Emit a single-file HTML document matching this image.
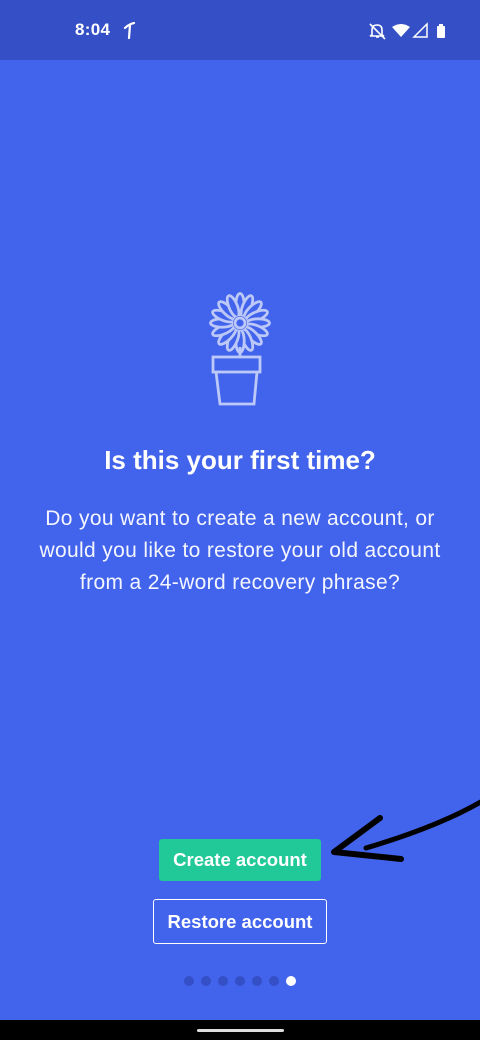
<!DOCTYPE html>
<html><head><meta charset="utf-8"><style>
*{margin:0;padding:0;box-sizing:border-box}
body{width:480px;height:1040px;background:#4263EB;position:relative;overflow:hidden;font-family:"Liberation Sans",sans-serif;color:#fff}
.sb{position:absolute;left:0;top:0;width:480px;height:60px;background:#3550C6}
.time{position:absolute;left:75px;top:20px;font-size:17px;font-weight:bold;letter-spacing:0.3px}
h1{position:absolute;top:445px;width:100%;text-align:center;font-size:26px;font-weight:bold}
.body{position:absolute;top:503px;width:100%;text-align:center;font-size:21px;letter-spacing:0.35px;line-height:32px;font-weight:300;color:#f4f6ff}
.btn{position:absolute;display:flex;align-items:center;justify-content:center;font-weight:bold;font-size:18.5px}
.c{left:159px;top:839px;width:162px;height:42px;background:#20C997;border-radius:3px}
.r{left:153px;top:899px;width:174px;height:45px;border:1.5px solid #fff;border-radius:3px}
.dot{position:absolute;top:976px;width:10px;height:10px;border-radius:50%;background:#3550C6}
.nav{position:absolute;left:0;top:1020px;width:480px;height:20px;background:#000}
.home{position:absolute;left:197px;top:1029px;width:87px;height:3px;border-radius:2px;background:#ddd}
</style></head><body>
<div class="sb"></div>
<div class="time">8:04</div>
<svg style="position:absolute;left:122px;top:22px" width="14" height="18" viewBox="0 0 14 18"><path d="M3 6 Q7 2 12 1 M8 3 L7 16" stroke="#fff" stroke-width="2.2" fill="none" stroke-linecap="round"/></svg>
<svg style="position:absolute;left:368px;top:22px" width="82" height="18" viewBox="0 0 82 18">
<path d="M4 13 L4 8 Q4 3 9 3 Q14 3 14 8 L14 13 L16 14 L2 14Z M8 15 h3" stroke="#fff" stroke-width="1.6" fill="none"/><path d="M2 2 L17 17" stroke="#fff" stroke-width="1.6"/>
<path d="M24 5 Q33 -1 42 5 L33 15Z" fill="#fff"/>
<path d="M46 15 L59 2 L59 15Z" stroke="#fff" stroke-width="1.5" fill="none"/>
<rect x="69" y="4" width="8" height="12" rx="1" fill="#fff"/><rect x="71" y="2" width="4" height="2" fill="#fff"/>
</svg>
<svg style="position:absolute;left:200px;top:285px" width="80" height="125" viewBox="0 0 80 125">
<g stroke="#BCC8F8" stroke-width="2.8" fill="none">
<g transform="translate(40,38)" fill="#4263EB">
<ellipse cx="0" cy="-18" rx="4.2" ry="11.5" transform="rotate(0)"/>
<ellipse cx="0" cy="-18" rx="4.2" ry="11.5" transform="rotate(22.5)"/>
<ellipse cx="0" cy="-18" rx="4.2" ry="11.5" transform="rotate(45)"/>
<ellipse cx="0" cy="-18" rx="4.2" ry="11.5" transform="rotate(67.5)"/>
<ellipse cx="0" cy="-18" rx="4.2" ry="11.5" transform="rotate(90)"/>
<ellipse cx="0" cy="-18" rx="4.2" ry="11.5" transform="rotate(112.5)"/>
<ellipse cx="0" cy="-18" rx="4.2" ry="11.5" transform="rotate(135)"/>
<ellipse cx="0" cy="-18" rx="4.2" ry="11.5" transform="rotate(157.5)"/>
<ellipse cx="0" cy="-18" rx="4.2" ry="11.5" transform="rotate(180)"/>
<ellipse cx="0" cy="-18" rx="4.2" ry="11.5" transform="rotate(202.5)"/>
<ellipse cx="0" cy="-18" rx="4.2" ry="11.5" transform="rotate(225)"/>
<ellipse cx="0" cy="-18" rx="4.2" ry="11.5" transform="rotate(247.5)"/>
<ellipse cx="0" cy="-18" rx="4.2" ry="11.5" transform="rotate(270)"/>
<ellipse cx="0" cy="-18" rx="4.2" ry="11.5" transform="rotate(292.5)"/>
<ellipse cx="0" cy="-18" rx="4.2" ry="11.5" transform="rotate(315)"/>
<ellipse cx="0" cy="-18" rx="4.2" ry="11.5" transform="rotate(337.5)"/>
</g>
<circle cx="40" cy="38" r="7" fill="#4263EB" stroke="none"/>
<circle cx="40" cy="38" r="5"/>
<path d="M40 62 L40 72"/>
<rect x="13" y="72" width="47" height="15"/>
<path d="M16 87 L20 119 L54 119 L57 87"/>
</g>
</svg>
<h1>Is this your first time?</h1>
<div class="body">Do you want to create a new account, or<br>would you like to restore your old account<br>from a 24-word recovery phrase?</div>
<div class="btn c">Create account</div>
<div class="btn r">Restore account</div>
<svg style="position:absolute;left:0;top:0" width="480" height="1040">
<path d="M484 800 Q440 826 366 848" stroke="#000" stroke-width="5" fill="none" stroke-linecap="round"/>
<path d="M380 818 L334 852 L401 859" stroke="#000" stroke-width="6" fill="none" stroke-linecap="round" stroke-linejoin="round"/>
</svg>
<div class="dot" style="left:184px"></div>
<div class="dot" style="left:201px"></div>
<div class="dot" style="left:218px"></div>
<div class="dot" style="left:235px"></div>
<div class="dot" style="left:252px"></div>
<div class="dot" style="left:269px"></div>
<div class="dot" style="left:286px;background:#fff"></div>
<div class="nav"></div><div class="home"></div>
</body></html>
